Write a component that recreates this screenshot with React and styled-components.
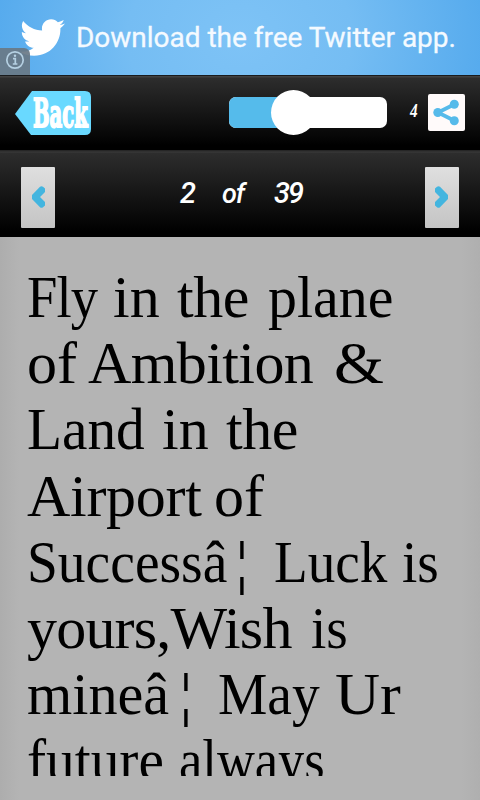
import React, { useState } from 'react';
import styled, { createGlobalStyle } from 'styled-components';
import { FaTwitter } from 'react-icons/fa';

const TOTAL = 39;

// every word: text, advance to the next word, tracking, horizontal scale
const lines = [
  [['Fly', 86, -1, 0.91], ['in', 64, 0], ['the', 91, -0.5], ['plane', 126, 0, 0.965]],
  [['of', 61, 0], ['Ambition', 246, -0.6], ['&', 50, 0, 1.07]],
  [['Land', 135, 0, 0.955], ['in', 64, 0], ['the', 74, -0.5]],
  [['Airport', 187, -0.3], ['of', 52, 0]],
  [['Successâ', 208, 0, 0.925], ['¦', 39, 0, 1.15], ['Luck', 128, 0, 0.92], ['is', 36, 0, 0.92]],
  [['yours,Wish', 284, -0.8], ['is', 36, 0, 0.92]],
  [['mineâ', 152, 0, 0.97], ['¦', 39, 0, 1.15], ['May', 117, 0, 0.925], ['Ur', 66, 0, 1.04]],
  [['future', 152, 0, 0.955], ['always', 146, 0, 0.875]],
];

function AdBanner() {
  return (
    <StyledAd>
      <FaTwitter className="bird" />
      <p>Download the free Twitter app.</p>
      <InfoBadge>
        <svg width="20" height="20" viewBox="0 0 20 20" fill="none">
          <circle cx="10" cy="10" r="8.2" stroke="#b5d0e2" strokeWidth="1.7" />
          <path d="M8 8.6h2.3v5M7.8 14h4.6" stroke="#b5d0e2" strokeWidth="1.7" />
          <circle cx="10" cy="5.7" r="1.2" fill="#b5d0e2" />
        </svg>
      </InfoBadge>
    </StyledAd>
  );
}

function BackButton() {
  return (
    <StyledBack type="button">
      <svg width="76" height="44" viewBox="0 0 76 44">
        <path d="M0 23 17 0h53q6 0 6 6v32q0 6-6 6H16z" fill="#69d9ff" />
      </svg>
      <span>Back</span>
    </StyledBack>
  );
}

function ShareButton() {
  return (
    <StyledShare type="button">
      <svg width="37" height="37" viewBox="0 0 37 37">
        <path
          d="M26 10.5 10 18.5 26 26.5"
          fill="none"
          stroke="#56baea"
          strokeWidth="3.8"
        />
        <circle cx="26.3" cy="10.3" r="4.5" fill="#56baea" />
        <circle cx="9.8" cy="18.5" r="4.5" fill="#56baea" />
        <circle cx="26.3" cy="26.7" r="4.5" fill="#56baea" />
      </svg>
    </StyledShare>
  );
}

function PageButton({ next, onClick }) {
  return (
    <StyledPageButton type="button" onClick={onClick}>
      <svg width="13" height="22" viewBox="0 0 13 22">
        <path
          d="M8 .8Q9.5-.5 11 .8L13 2.5V6L8 11l5 5v3.5l-2 1.700q-1.500 1.300-3 0L0 13V9z"
          transform={next ? 'matrix(-1 0 0 1 13 0)' : undefined}
          fill="#43b5df"
        />
      </svg>
    </StyledPageButton>
  );
}

function App() {
  const [page, setPage] = useState(2);

  return (
    <Screen>
      <GlobalStyle />
      <AdBanner />
      <Toolbar>
        <BackButton />
        <Slider>
          <div className="fill" />
          <div className="thumb" />
        </Slider>
        <SizeValue>4</SizeValue>
        <ShareButton />
      </Toolbar>
      <Pager>
        <PageButton onClick={() => setPage(Math.max(1, page - 1))} />
        <Counter>
          <span>{page}</span>
          <span className="of">of</span>
          <span className="total">{TOTAL}</span>
        </Counter>
        <PageButton next onClick={() => setPage(Math.min(TOTAL, page + 1))} />
      </Pager>
      <Content>
        <Message>
          {lines.map((words, i) => (
            <Line key={i}>
              {words.map(([text, advance, tracking, scale = 1], j) => (
                <Word
                  key={j}
                  $advance={advance}
                  $tracking={tracking}
                  $scale={scale}
                >
                  {text}
                </Word>
              ))}
            </Line>
          ))}
        </Message>
      </Content>
    </Screen>
  );
}

export default App;

const GlobalStyle = createGlobalStyle`
  * {
    box-sizing: border-box;
  }

  body {
    margin: 0;
    background: #b3b3b3;
  }

  button {
    padding: 0;
    border: 0;
    cursor: pointer;
  }

  p {
    margin: 0;
  }
`;

const Screen = styled.div`
  display: flex;
  flex-direction: column;
  width: 480px;
  height: 800px;
  overflow: hidden;
`;

const StyledAd = styled.div`
  position: relative;
  display: flex;
  align-items: center;
  flex: 0 0 75px;
  padding-left: 20px;
  background: radial-gradient(
    ellipse 250px 210px at 50% 50%,
    #7ec3f6 0%,
    #75bdf3 45%,
    #55aaed 100%
  );

  .bird {
    width: 45px;
    height: 45px;
    color: #fff;
  }

  p {
    margin-left: 11px;
    color: #f4faff;
    font: 400 28px/40px Roboto, sans-serif;
    letter-spacing: -0.02px;
    -webkit-text-stroke: 0.3px #f4faff;
    white-space: nowrap;
  }
`;

const InfoBadge = styled.div`
  position: absolute;
  left: 0;
  bottom: 0;
  width: 30px;
  height: 27px;
  padding: 2px 0 0 5px;
  border-top-right-radius: 6px;
  background: rgba(105, 120, 133, 0.92);
`;

const Toolbar = styled.div`
  display: flex;
  align-items: center;
  flex: 0 0 75px;
  padding: 0 15px 1px;
  border-top: 1px solid #191b1d;
  background: linear-gradient(#414141 1px, #2d2d2d 2px, #000 94%);
`;

const StyledBack = styled.button`
  position: relative;
  width: 76px;
  height: 44px;
  margin-top: 1px;
  background: none;

  svg {
    display: block;
  }

  span {
    position: absolute;
    left: 18px;
    top: 0;
    color: #fff;
    font: 700 40px/44px 'DejaVu Serif', serif;
    -webkit-text-stroke: 2px #fff;
    transform: scaleX(0.49);
    transform-origin: left;
  }
`;

const Slider = styled.div`
  position: relative;
  width: 158px;
  height: 31px;
  margin-left: 138px;
  border-radius: 7px;
  background: #fff;

  .fill {
    width: 64px;
    height: 100%;
    border-radius: 7px 0 0 7px;
    background: #55bbeb;
  }

  .thumb {
    position: absolute;
    left: 42px;
    top: -7px;
    width: 45px;
    height: 45px;
    border-radius: 50%;
    background: #fff;
  }
`;

const SizeValue = styled.span`
  width: 18px;
  margin: -3px 0 0 23px;
  color: #fff;
  font: italic 700 18px/20px 'Liberation Serif', serif;
  transform: scaleX(0.85);
  transform-origin: left;
`;

const StyledShare = styled.button`
  width: 37px;
  height: 37px;
  border-radius: 2px;
  background: #fffafa;

  svg {
    display: block;
  }
`;

const Pager = styled.div`
  display: flex;
  align-items: center;
  justify-content: space-between;
  flex: 0 0 87px;
  padding: 7px 21px 0;
  background: linear-gradient(#262626 1px, #3c3c3c 2px, #2d2d2d 3px, #000 94%);
`;

const StyledPageButton = styled.button`
  display: flex;
  align-items: center;
  justify-content: center;
  width: 34px;
  height: 61px;
  border-radius: 1px;
  background: linear-gradient(#dfdfdf, #c4c4c4);
`;

const Counter = styled.div`
  display: flex;
  align-items: baseline;
  gap: 28px;
  margin: -7px 0 0 2px;
  color: #fff;
  font: italic 500 29px/34px Roboto, sans-serif;
  letter-spacing: -2px;

  .of {
    font-size: 27px;
    letter-spacing: -1px;
  }

  .total {
    margin-left: 2px;
  }
`;

const Content = styled.main`
  flex: 1;
  padding: 27px 27px 24px;
  background: linear-gradient(90deg, #adadad, #b4b4b4 4%, #b4b4b4 96%, #afafaf);
`;

const Message = styled.article`
  height: 512px;
  overflow: hidden;
  color: #000;
  font: 60px/66.2px 'Liberation Serif', serif;
`;

const Line = styled.p`
  display: flex;
  height: 66.2px;
  white-space: nowrap;
`;

const Word = styled.span`
  flex: 0 0 ${({ $advance }) => $advance}px;
  min-width: 0;
  letter-spacing: ${({ $tracking }) => $tracking}px;
  transform: scaleX(${({ $scale }) => $scale});
  transform-origin: left;
`;
